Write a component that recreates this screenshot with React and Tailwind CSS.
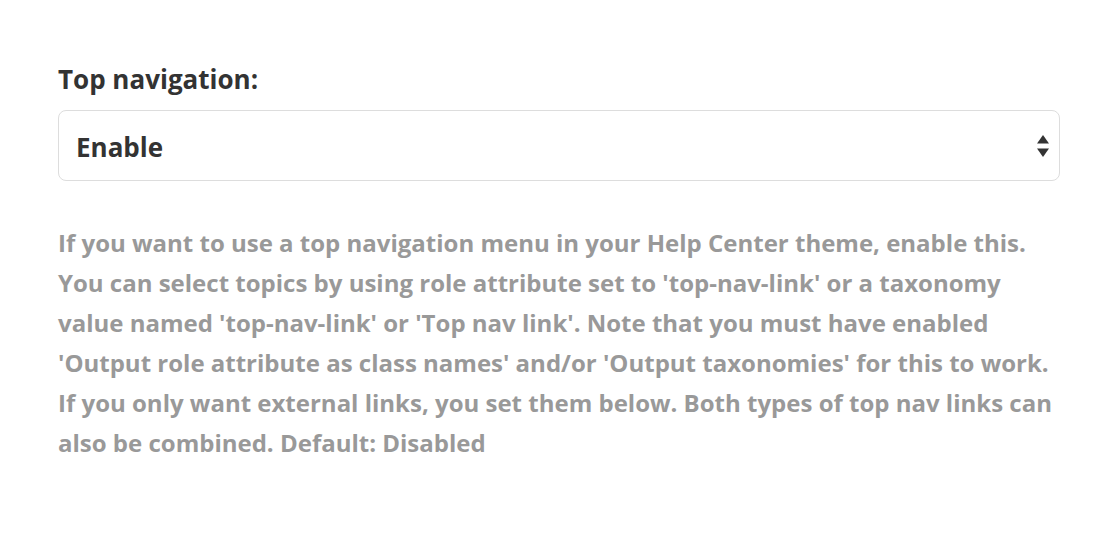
export default function App() {
  return (
    <div className="w-[1118px] h-[538px] bg-white" style={{ fontFamily: '"Open Sans", sans-serif' }}>
      <div className="pl-[58px] pt-[61px] w-[1060px]">
        <div className="text-[26px] leading-[36px] font-bold text-[#333333]">Top navigation:</div>
        <div className="mt-[13px] h-[71px] border border-[#dddddd] rounded-[8px] flex items-center justify-between pl-[17px] pr-[10px]">
          <span className="text-[26px] font-bold text-[#333333] pt-[4px]">Enable</span>
          <svg width="12" height="22" viewBox="0 0 12 22">
            <path d="M6 0 L12 8.5 L0 8.5 Z" fill="#333333" />
            <path d="M6 22 L12 13.5 L0 13.5 Z" fill="#333333" />
          </svg>
        </div>
        <p className="mt-[42px] text-[24px] leading-[40px] font-bold text-[#999999]">
          If you want to use a top navigation menu in your Help Center theme, enable this. You can select topics by using role attribute set to 'top-nav-link' or a taxonomy value named 'top-nav-link' or 'Top nav link'. Note that you must have enabled 'Output role attribute as class names' and/or 'Output taxonomies' for this to work. If you only want external links, you set them below. Both types of top nav links can also be combined. Default: Disabled
        </p>
      </div>
    </div>
  );
}
